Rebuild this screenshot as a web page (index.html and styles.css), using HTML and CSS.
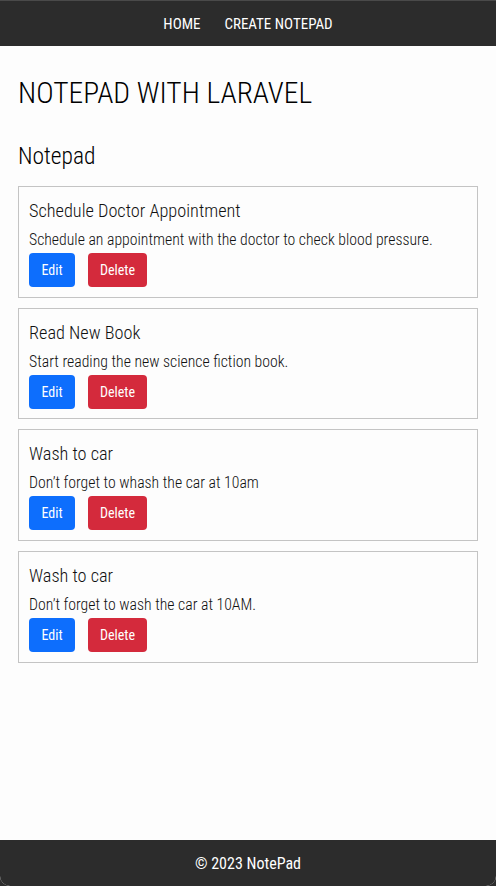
FILE: index.html
```html
<!DOCTYPE html>
<html>
<head>
<meta charset="utf-8">
<link rel="stylesheet" href="styles.css">
</head>
<body>
<div class="page">
  <nav class="nav">
    <a href="#">HOME</a>
    <a href="#">CREATE NOTEPAD</a>
  </nav>
  <main class="main">
    <h1 class="title">NOTEPAD WITH LARAVEL</h1>
    <h2 class="subtitle">Notepad</h2>
    <div class="list">
      <div class="card">
        <h3 class="card-title">Schedule Doctor Appointment</h3>
        <p class="card-text">Schedule an appointment with the doctor to check blood pressure.</p>
        <div class="actions"><a class="btn btn-edit" href="#">Edit</a><a class="btn btn-delete" href="#">Delete</a></div>
      </div>
      <div class="card">
        <h3 class="card-title">Read New Book</h3>
        <p class="card-text">Start reading the new science fiction book.</p>
        <div class="actions"><a class="btn btn-edit" href="#">Edit</a><a class="btn btn-delete" href="#">Delete</a></div>
      </div>
      <div class="card">
        <h3 class="card-title">Wash to car</h3>
        <p class="card-text">Don’t forget to whash the car at 10am</p>
        <div class="actions"><a class="btn btn-edit" href="#">Edit</a><a class="btn btn-delete" href="#">Delete</a></div>
      </div>
      <div class="card">
        <h3 class="card-title">Wash to car</h3>
        <p class="card-text">Don’t forget to wash the car at 10AM.</p>
        <div class="actions"><a class="btn btn-edit" href="#">Edit</a><a class="btn btn-delete" href="#">Delete</a></div>
      </div>
    </div>
  </main>
  <footer class="footer">© 2023 NotePad</footer>
</div>
</body>
</html>
```
FILE: styles.css
```css
html, body {
  margin: 0;
  padding: 0;
  height: 100%;
}
body {
  background: #2c2c2c;
  font-family: "Roboto Condensed", Roboto, sans-serif;
  font-weight: 300;
  color: #111;
}
.page {
  height: 886px;
  display: flex;
  flex-direction: column;
  background: #fdfdfd;
  border-radius: 0 0 10px 10px;
  overflow: hidden;
}
.nav {
  height: 46px;
  flex: none;
  background: #2c2c2c;
  border-top: 1px solid #4a4a4a;
  box-sizing: border-box;
  display: flex;
  justify-content: center;
  align-items: center;
  gap: 24px;
}
.nav a {
  color: #fff;
  text-decoration: none;
  font-size: 15px;
  font-weight: 400;
}
.main {
  flex: 1;
  padding: 0 18px;
}
.title {
  margin: 29px 0 0;
  font-size: 29.5px;
  font-weight: 300;
  line-height: 36px;
  color: #000;
}
.subtitle {
  margin: 31px 0 0;
  font-size: 23.5px;
  font-weight: 300;
  line-height: 29px;
  color: #000;
}
.list {
  margin-top: 15px;
  display: flex;
  flex-direction: column;
  gap: 10px;
}
.card {
  border: 1px solid #c4c4c4;
  padding: 12px 10px 10px;
  height: 111.67px;
  box-sizing: border-box;
}
.card-title {
  margin: 0;
  font-size: 18.3px;
  font-weight: 300;
  line-height: 23px;
}
.card-text {
  margin: 8px 0 3px;
  font-size: 15.75px;
  line-height: 20px;
}
.actions {
  display: flex;
  gap: 13px;
}
.btn {
  color: #fff;
  text-decoration: none;
  font-size: 14px;
  font-weight: 400;
  height: 34px;
  line-height: 34px;
  border-radius: 4px;
  text-align: center;
}
.btn-edit {
  background: #0d6efd;
  width: 46px;
}
.btn-delete {
  background: #d42a3c;
  width: 59px;
}
.footer {
  height: 46px;
  flex: none;
  background: #2c2c2c;
  color: #fff;
  font-size: 16px;
  font-weight: 400;
  display: flex;
  align-items: center;
  justify-content: center;
}
```
